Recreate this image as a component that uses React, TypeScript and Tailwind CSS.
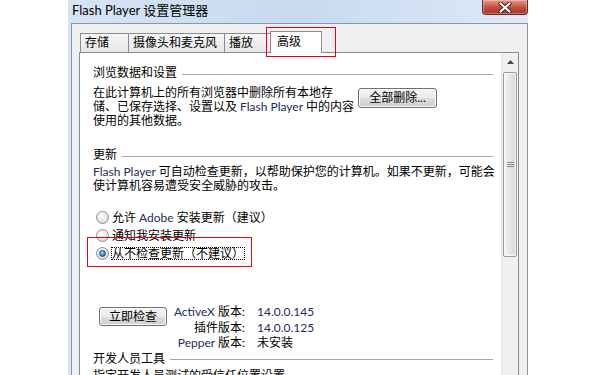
import type { ReactNode } from "react";

function Latin({ children }: { children: ReactNode }) {
  return <span className="text-[#1d2c5e]">{children}</span>;
}

function CloseButton() {
  return (
    <div className="flex h-[15px] w-[46px] items-center justify-center rounded-b-[4px] border border-t-0 border-[#6e2a22] bg-gradient-to-b from-[#e29a8a] via-[#c9503f] to-[#a9342a] shadow-[inset_0_0_0_1px_rgba(255,255,255,0.3)]">
      <svg width="14" height="11" viewBox="0 0 14 11">
        <path d="M2.5 1.5 L11.5 9.5 M11.5 1.5 L2.5 9.5" stroke="#4a1a12" strokeWidth="4" strokeLinecap="round" />
        <path d="M2.5 1.5 L11.5 9.5 M11.5 1.5 L2.5 9.5" stroke="#ffffff" strokeWidth="2.2" strokeLinecap="round" />
      </svg>
    </div>
  );
}

function Tab({ label, width, selected }: { label: string; width: string; selected?: boolean }) {
  if (selected) {
    return (
      <div className={`relative z-10 -mb-px flex h-[22px] ${width} items-start border border-b-0 border-[#898c95] bg-white pl-[6px] pt-[3px] leading-[14px]`}>
        {label}
      </div>
    );
  }
  return (
    <div className={`flex h-[19px] ${width} items-start border border-b-0 border-r-0 border-[#898c95] bg-gradient-to-b from-[#f7f7f7] to-[#e6e6e6] pl-[4px] pt-[2px] leading-[14px]`}>
      {label}
    </div>
  );
}

function SectionHeader({ title, className }: { title: string; className?: string }) {
  return (
    <div className={`flex h-[16px] items-center leading-[16px] ${className ?? ""}`}>
      <span>{title}</span>
      <div className="ml-[5px] mt-[2px] h-px flex-1 bg-[#a5a5a5]" />
    </div>
  );
}

function WinButton({ label, className }: { label: string; className?: string }) {
  return (
    <div
      className={`flex shrink-0 items-center justify-center rounded-[3px] border border-[#707070] bg-[linear-gradient(#f2f2f2_0%,#ebebeb_50%,#dddddd_51%,#cfcfcf_100%)] leading-[14px] shadow-[inset_0_0_0_1px_#fbfbfb] ${className ?? ""}`}
    >
      {label}
    </div>
  );
}

function Radio({ checked }: { checked?: boolean }) {
  return (
    <span className="flex h-[13px] w-[13px] shrink-0 items-center justify-center rounded-full border border-[#8e8f8f] bg-[radial-gradient(circle_at_40%_35%,#ffffff,#e6e6e6_55%,#c9c9c9)]">
      {checked && (
        <span className="h-[7px] w-[7px] rounded-full border border-[#1c5180] bg-[radial-gradient(circle_at_40%_35%,#a8e4ff,#3b8fd0_55%,#13528f)]" />
      )}
    </span>
  );
}

function RadioRow({ children, checked, focused }: { children: ReactNode; checked?: boolean; focused?: boolean }) {
  return (
    <div className="ml-[3px] flex h-[18px] items-center">
      <Radio checked={checked} />
      <span
        className={`ml-[2px] border leading-[11px] ${focused ? "border-dotted border-black" : "border-transparent"}`}
      >
        {children}
      </span>
    </div>
  );
}

function Scrollbar() {
  return (
    <div className="flex w-[17px] shrink-0 flex-col border-l border-[#e4e4e4] bg-[#f0f0f0]">
      <div className="flex h-[17px] items-center justify-center">
        <svg width="7" height="4" viewBox="0 0 7 4">
          <path d="M3.5 0 L7 4 L0 4 Z" fill="#4a4a4a" />
        </svg>
      </div>
      <div className="mx-[1px] mt-[2px] flex h-[185px] flex-col items-center justify-center gap-[1px] rounded-[2px] border border-[#9a9a9a] bg-gradient-to-r from-[#f4f4f4] via-[#e6e6e6] to-[#d6d6d6] shadow-[inset_0_0_0_1px_rgba(255,255,255,0.7)]">
        <div className="h-px w-[7px] bg-[#8a8a8a]" />
        <div className="h-px w-[7px] bg-[#8a8a8a]" />
        <div className="h-px w-[7px] bg-[#8a8a8a]" />
      </div>
    </div>
  );
}

export default function App() {
  return (
    <div className="relative h-[375px] w-[600px] overflow-hidden bg-white font-['Lato','Noto_Sans_CJK_SC',sans-serif] text-[12px] text-black">
      <div className="ml-[68px] flex h-full w-[460px] flex-col bg-gradient-to-r from-[#d6e5f5] via-[#c7daf0] to-[#dde9f6]">
        {/* title bar */}
        <div className="flex h-[23px] shrink-0 items-start justify-between">
          <span className="ml-[4px] mt-[2px] text-[13px] leading-[16px]">Flash Player 设置管理器</span>
          <CloseButton />
        </div>

        {/* client area */}
        <div className="ml-[3px] flex flex-1 flex-col border-l border-r border-t border-[#8a96a6] bg-[#f0f0f0] pt-[7px]">
          <div className="ml-[8px] flex h-[21px] items-end">
            <Tab label="存储" width="w-[48px]" />
            <Tab label="摄像头和麦克风" width="w-[96px]" />
            <Tab label="播放" width="w-[46px]" />
            <Tab label="高级" width="w-[52px]" selected />
          </div>

          <div className="ml-[7px] flex w-[440px] flex-1 border border-b-0 border-[#898c95] bg-white">
            <div className="flex-1 overflow-hidden pl-[13px] pr-[8px]">
              <SectionHeader title="浏览数据和设置" className="mt-[12px]" />
              <div className="mt-[5px] flex">
                <p className="w-[265px] shrink-0 whitespace-nowrap leading-[14px]">
                  在此计算机上的所有浏览器中删除所有本地存
                  <br />
                  储、已保存选择、设置以及 <Latin>Flash Player</Latin> 中的内容
                  <br />
                  使用的其他数据。
                </p>
                <WinButton label="全部删除..." className="mt-[2px] h-[20px] w-[79px]" />
              </div>

              <SectionHeader title="更新" className="mt-[19px]" />
              <p className="mt-[2px] whitespace-nowrap leading-[14px]">
                <Latin>Flash Player</Latin> 可自动检查更新，以帮助保护您的计算机。如果不更新，可能会
                <br />
                使计算机容易遭受安全威胁的攻击。
              </p>

              <div className="mt-[15px] flex flex-col">
                <RadioRow>
                  允许 <Latin>Adobe</Latin> 安装更新（建议）
                </RadioRow>
                <RadioRow>通知我安装更新</RadioRow>
                <RadioRow checked focused>
                  从不检查更新（不建议）
                </RadioRow>
              </div>

              <div className="mt-[42px] flex items-start">
                <WinButton label="立即检查" className="ml-[6px] mt-[3px] h-[19px] w-[68px]" />
                <div className="ml-[3px] grid grid-cols-[75px_auto] gap-x-[12px] leading-[15.5px]">
                  <span className="text-right">
                    <Latin>ActiveX</Latin> 版本:
                  </span>
                  <span>
                    <Latin>14.0.0.145</Latin>
                  </span>
                  <span className="text-right">插件版本:</span>
                  <span>
                    <Latin>14.0.0.125</Latin>
                  </span>
                  <span className="text-right">
                    <Latin>Pepper</Latin> 版本:
                  </span>
                  <span>未安装</span>
                </div>
              </div>

              <SectionHeader title="开发人员工具" />
              <p className="mt-[2px] whitespace-nowrap leading-[14px]">指定开发人员测试的受信任位置设置</p>
            </div>
            <Scrollbar />
          </div>
        </div>
      </div>

      {/* annotation boxes */}
      <div className="absolute left-[266px] top-[27px] h-[30px] w-[70px] border border-[#e60012]" />
      <div className="absolute left-[87px] top-[237px] h-[30px] w-[165px] border border-[#e60012]" />
    </div>
  );
}
